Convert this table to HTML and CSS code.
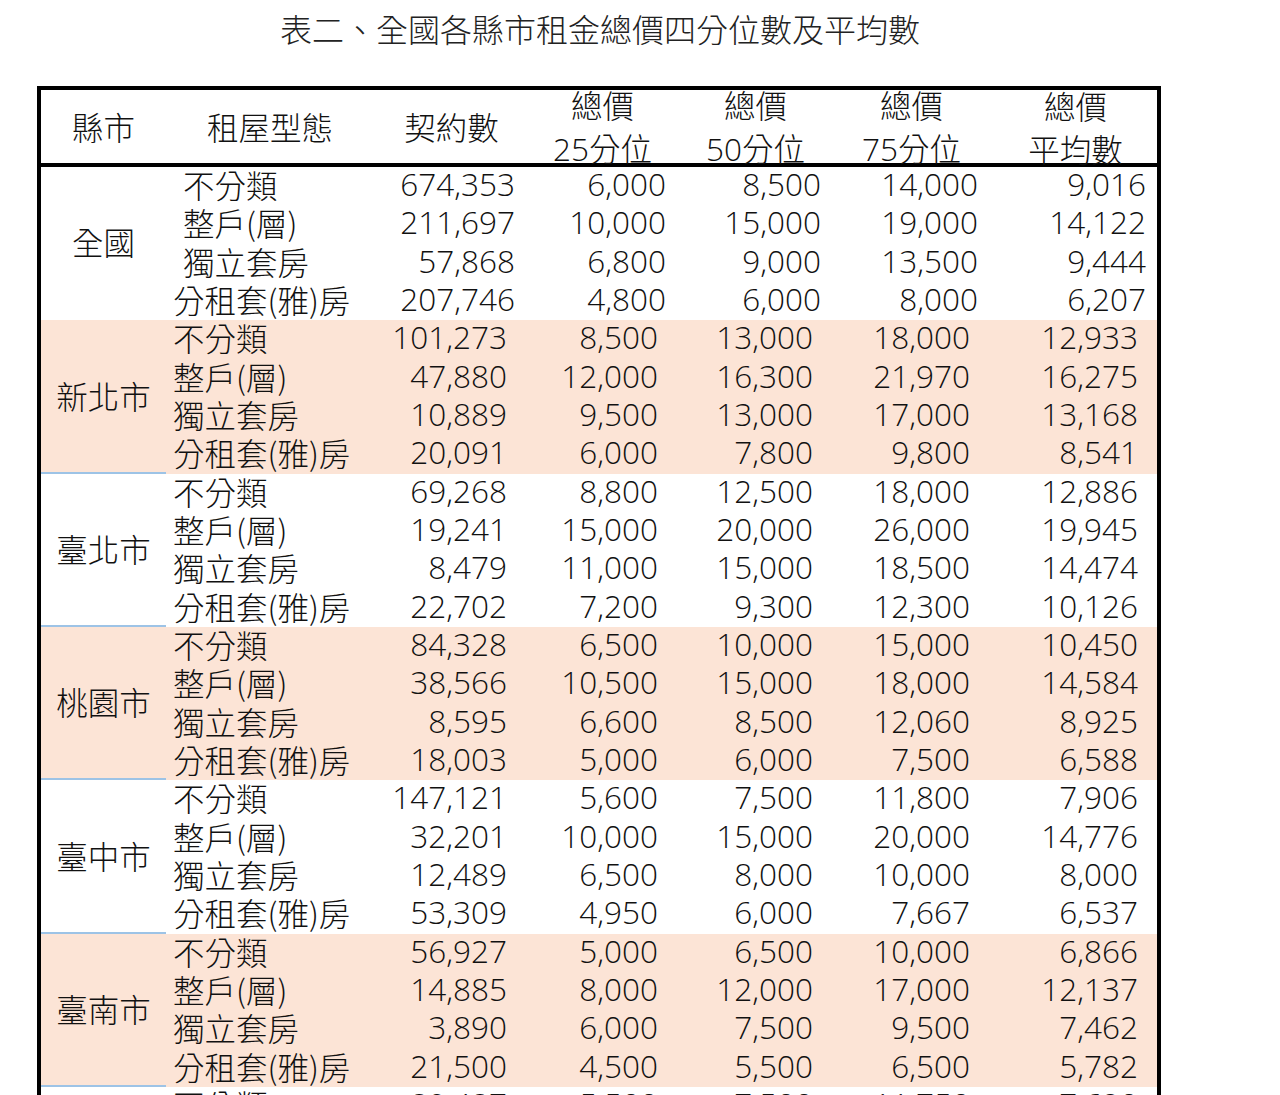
FILE: index.html
```html
<!DOCTYPE html>
<html lang="zh-Hant">
<head>
<meta charset="utf-8">
<title>表二、全國各縣市租金總價四分位數及平均數</title>
<link rel="stylesheet" href="styles.css">
</head>
<body>
<div class="page">
  <h1 class="title">表二、全國各縣市租金總價四分位數及平均數</h1>
  <table class="rent">
    <colgroup>
      <col class="c-city"><col class="c-type"><col class="c-count"><col class="c-q25"><col class="c-q50"><col class="c-q75"><col class="c-avg">
    </colgroup>
    <thead>
      <tr>
        <th><div class="hd hd-city"><span>縣市</span></div></th>
        <th><div class="hd hd-type"><span>租屋型態</span></div></th>
        <th><div class="hd hd-count"><span>契約數</span></div></th>
        <th><div class="hd hd-q"><span>總價<br><span class="dg">25</span>分位</span></div></th>
        <th><div class="hd hd-q"><span>總價<br><span class="dg">50</span>分位</span></div></th>
        <th><div class="hd hd-q"><span>總價<br><span class="dg">75</span>分位</span></div></th>
        <th><div class="hd hd-avg"><span>總價<br>平均數</span></div></th>
      </tr>
    </thead>
    <tbody class="grp nat">
      <tr><td class="city" rowspan="4">全國</td><td class="type ind">不分類</td><td class="num">674,353</td><td class="num">6,000</td><td class="num">8,500</td><td class="num">14,000</td><td class="num last">9,016</td></tr>
      <tr><td class="type ind">整戶(層)</td><td class="num">211,697</td><td class="num">10,000</td><td class="num">15,000</td><td class="num">19,000</td><td class="num last">14,122</td></tr>
      <tr><td class="type ind">獨立套房</td><td class="num">57,868</td><td class="num">6,800</td><td class="num">9,000</td><td class="num">13,500</td><td class="num last">9,444</td></tr>
      <tr><td class="type">分租套(雅)房</td><td class="num">207,746</td><td class="num">4,800</td><td class="num">6,000</td><td class="num">8,000</td><td class="num last">6,207</td></tr>
    </tbody>
    <tbody class="grp shaded">
      <tr><td class="city line" rowspan="4">新北市</td><td class="type">不分類</td><td class="num">101,273</td><td class="num">8,500</td><td class="num">13,000</td><td class="num">18,000</td><td class="num last">12,933</td></tr>
      <tr><td class="type">整戶(層)</td><td class="num">47,880</td><td class="num">12,000</td><td class="num">16,300</td><td class="num">21,970</td><td class="num last">16,275</td></tr>
      <tr><td class="type">獨立套房</td><td class="num">10,889</td><td class="num">9,500</td><td class="num">13,000</td><td class="num">17,000</td><td class="num last">13,168</td></tr>
      <tr><td class="type">分租套(雅)房</td><td class="num">20,091</td><td class="num">6,000</td><td class="num">7,800</td><td class="num">9,800</td><td class="num last">8,541</td></tr>
    </tbody>
    <tbody class="grp">
      <tr><td class="city line" rowspan="4">臺北市</td><td class="type">不分類</td><td class="num">69,268</td><td class="num">8,800</td><td class="num">12,500</td><td class="num">18,000</td><td class="num last">12,886</td></tr>
      <tr><td class="type">整戶(層)</td><td class="num">19,241</td><td class="num">15,000</td><td class="num">20,000</td><td class="num">26,000</td><td class="num last">19,945</td></tr>
      <tr><td class="type">獨立套房</td><td class="num">8,479</td><td class="num">11,000</td><td class="num">15,000</td><td class="num">18,500</td><td class="num last">14,474</td></tr>
      <tr><td class="type">分租套(雅)房</td><td class="num">22,702</td><td class="num">7,200</td><td class="num">9,300</td><td class="num">12,300</td><td class="num last">10,126</td></tr>
    </tbody>
    <tbody class="grp shaded">
      <tr><td class="city line" rowspan="4">桃園市</td><td class="type">不分類</td><td class="num">84,328</td><td class="num">6,500</td><td class="num">10,000</td><td class="num">15,000</td><td class="num last">10,450</td></tr>
      <tr><td class="type">整戶(層)</td><td class="num">38,566</td><td class="num">10,500</td><td class="num">15,000</td><td class="num">18,000</td><td class="num last">14,584</td></tr>
      <tr><td class="type">獨立套房</td><td class="num">8,595</td><td class="num">6,600</td><td class="num">8,500</td><td class="num">12,060</td><td class="num last">8,925</td></tr>
      <tr><td class="type">分租套(雅)房</td><td class="num">18,003</td><td class="num">5,000</td><td class="num">6,000</td><td class="num">7,500</td><td class="num last">6,588</td></tr>
    </tbody>
    <tbody class="grp">
      <tr><td class="city line" rowspan="4">臺中市</td><td class="type">不分類</td><td class="num">147,121</td><td class="num">5,600</td><td class="num">7,500</td><td class="num">11,800</td><td class="num last">7,906</td></tr>
      <tr><td class="type">整戶(層)</td><td class="num">32,201</td><td class="num">10,000</td><td class="num">15,000</td><td class="num">20,000</td><td class="num last">14,776</td></tr>
      <tr><td class="type">獨立套房</td><td class="num">12,489</td><td class="num">6,500</td><td class="num">8,000</td><td class="num">10,000</td><td class="num last">8,000</td></tr>
      <tr><td class="type">分租套(雅)房</td><td class="num">53,309</td><td class="num">4,950</td><td class="num">6,000</td><td class="num">7,667</td><td class="num last">6,537</td></tr>
    </tbody>
    <tbody class="grp shaded">
      <tr><td class="city line" rowspan="4">臺南市</td><td class="type">不分類</td><td class="num">56,927</td><td class="num">5,000</td><td class="num">6,500</td><td class="num">10,000</td><td class="num last">6,866</td></tr>
      <tr><td class="type">整戶(層)</td><td class="num">14,885</td><td class="num">8,000</td><td class="num">12,000</td><td class="num">17,000</td><td class="num last">12,137</td></tr>
      <tr><td class="type">獨立套房</td><td class="num">3,890</td><td class="num">6,000</td><td class="num">7,500</td><td class="num">9,500</td><td class="num last">7,462</td></tr>
      <tr><td class="type">分租套(雅)房</td><td class="num">21,500</td><td class="num">4,500</td><td class="num">5,500</td><td class="num">6,500</td><td class="num last">5,782</td></tr>
    </tbody>
    <tbody class="grp">
      <tr><td class="city line" rowspan="4">高雄市</td><td class="type">不分類</td><td class="num">89,487</td><td class="num">5,500</td><td class="num">7,500</td><td class="num">11,750</td><td class="num last">7,620</td></tr>
      <tr><td class="type">整戶(層)</td><td class="num">21,305</td><td class="num">9,000</td><td class="num">13,000</td><td class="num">17,000</td><td class="num last">13,214</td></tr>
      <tr><td class="type">獨立套房</td><td class="num">7,842</td><td class="num">6,000</td><td class="num">7,000</td><td class="num">8,500</td><td class="num last">7,411</td></tr>
      <tr><td class="type">分租套(雅)房</td><td class="num">26,116</td><td class="num">4,500</td><td class="num">5,500</td><td class="num">6,500</td><td class="num last">5,807</td></tr>
    </tbody>
  </table>
</div>
</body>
</html>
```

FILE: styles.css
```css
html, body {
  margin: 0;
  padding: 0;
  background: #ffffff;
}

body {
  font-family: "Noto Sans CJK TC", "Noto Sans CJK SC", "Noto Sans", sans-serif;
  color: #111;
}

.page {
  width: 1200px;
  padding: 8px 0 0 0;
}

.title {
  margin: 0 0 38px 0;
  width: 1200px;
  text-align: center;
  font-size: 32px;
  font-weight: 300;
  line-height: 40px;
  color: #222;
}

.rent {
  margin-left: 37px;
  width: 1124px;
  table-layout: fixed;
  border-collapse: separate;
  border-spacing: 0;
  border: 4px solid #000;
  font-size: 31.5px;
  font-weight: 300;
}

.c-city { width: 125px; }
.c-type { width: 196px; }
.c-count { width: 153px; }
.c-q25 { width: 151px; }
.c-q50 { width: 155px; }
.c-q75 { width: 157px; }
.c-avg { width: 179px; }

.rent th {
  padding: 0;
  font-weight: 300;
  border-bottom: 4px solid #000;
  height: 73px;
}

.hd {
  height: 73px;
  display: flex;
  align-items: center;
  justify-content: center;
  text-align: center;
  line-height: 43px;
  white-space: nowrap;
}

.hd-type { padding-left: 12px; }
.hd-count { padding-left: 26px; }
.hd-q { padding-left: 24px; }
.hd-avg { padding-left: 16px; }

.dg {
  font-family: "Open Sans", "Noto Sans", sans-serif;
  font-weight: 300;
}

.rent td {
  padding: 0 0 4px 0;
  height: 34.33px;
  line-height: 34.33px;
  white-space: nowrap;
}

.rent td.num {
  font-family: "Open Sans", "Noto Sans", sans-serif;
  font-weight: 300;
}

.shaded td {
  background: #fce4d6;
}

.city {
  text-align: center;
  vertical-align: middle;
}

.city.line {
  box-shadow: inset 0 -2px 0 #9dc3e6;
}

.type {
  text-align: left;
  padding-left: 7px !important;
}

.type.ind {
  padding-left: 17px !important;
}

.num {
  text-align: right;
  padding-right: 8px !important;
}

.num.last {
  padding-right: 19px !important;
}

.nat .num {
  padding-right: 0 !important;
}

.nat .num.last {
  padding-right: 11px !important;
}
```
